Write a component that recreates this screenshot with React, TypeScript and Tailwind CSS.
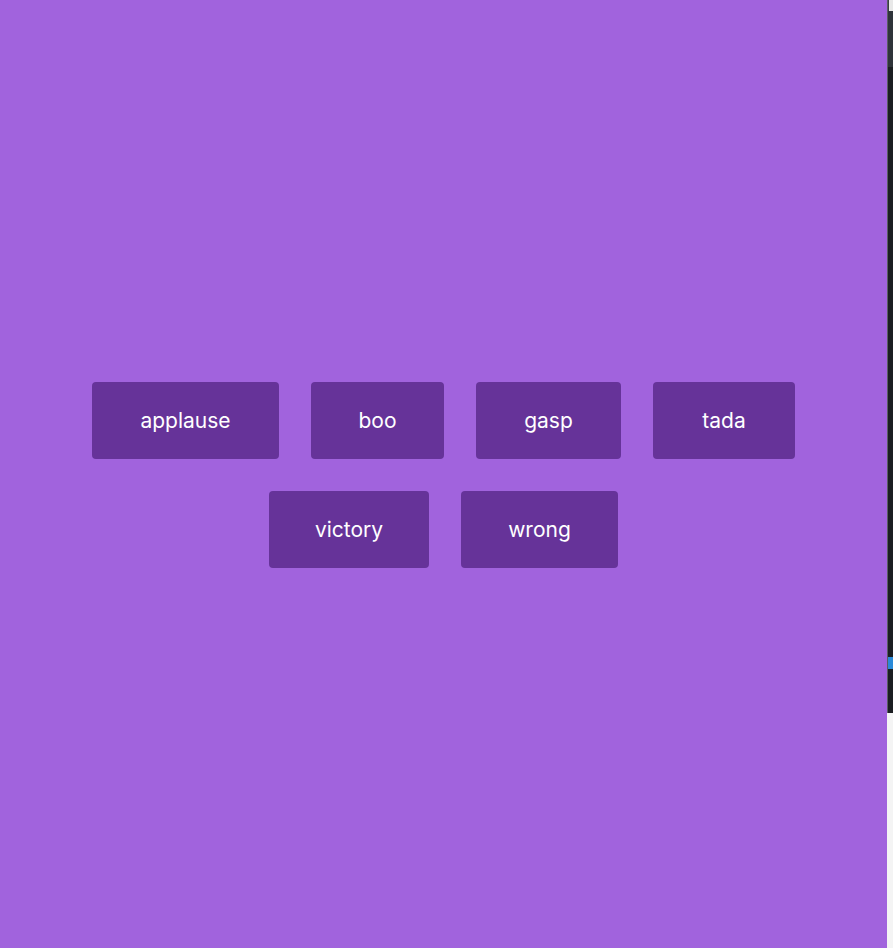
import React from 'react';

const sounds = [
  { name: 'applause', w: 'w-[187px]' },
  { name: 'boo', w: 'w-[133px]' },
  { name: 'gasp', w: 'w-[145px]' },
  { name: 'tada', w: 'w-[142px]' },
  { name: 'victory', w: 'w-[160px]' },
  { name: 'wrong', w: 'w-[157px]' },
];

const App = () => {
  return (
    <div className="flex h-[948px] w-full overflow-hidden bg-white">
      <main className="flex h-full w-[887px] items-center justify-center bg-[#a163dd] pt-[2px] font-['Inter','Noto_Sans',sans-serif]">
        <div className="flex w-[720px] flex-wrap justify-center gap-8">
          {sounds.map((s) => (
            <button
              key={s.name}
              className={`${s.w} h-[77px] rounded bg-[#663399] pb-[1px] text-[21px] leading-none text-white`}
            >
              {s.name}
            </button>
          ))}
        </div>
      </main>
      {/* sliver of the neighbouring window */}
      <div className="flex h-full w-[6px] flex-col">
        <div className="flex h-[713px] flex-col border-l border-[#5a5e63]">
          <div className="h-[11px] bg-[#3a3e44]">
            <div className="ml-auto h-full w-[4px] bg-[#e8e8e8]" />
          </div>
          <div className="h-[56px] bg-[#2f343a]" />
          <div className="h-[590px] bg-[#1b1e22]" />
          <div className="h-[12px] bg-[#2a8ad8]" />
          <div className="flex-1 bg-[#1b1e22]" />
        </div>
        <div className="flex-1 bg-[#f4f4f4]" />
      </div>
    </div>
  );
};

export default App;
